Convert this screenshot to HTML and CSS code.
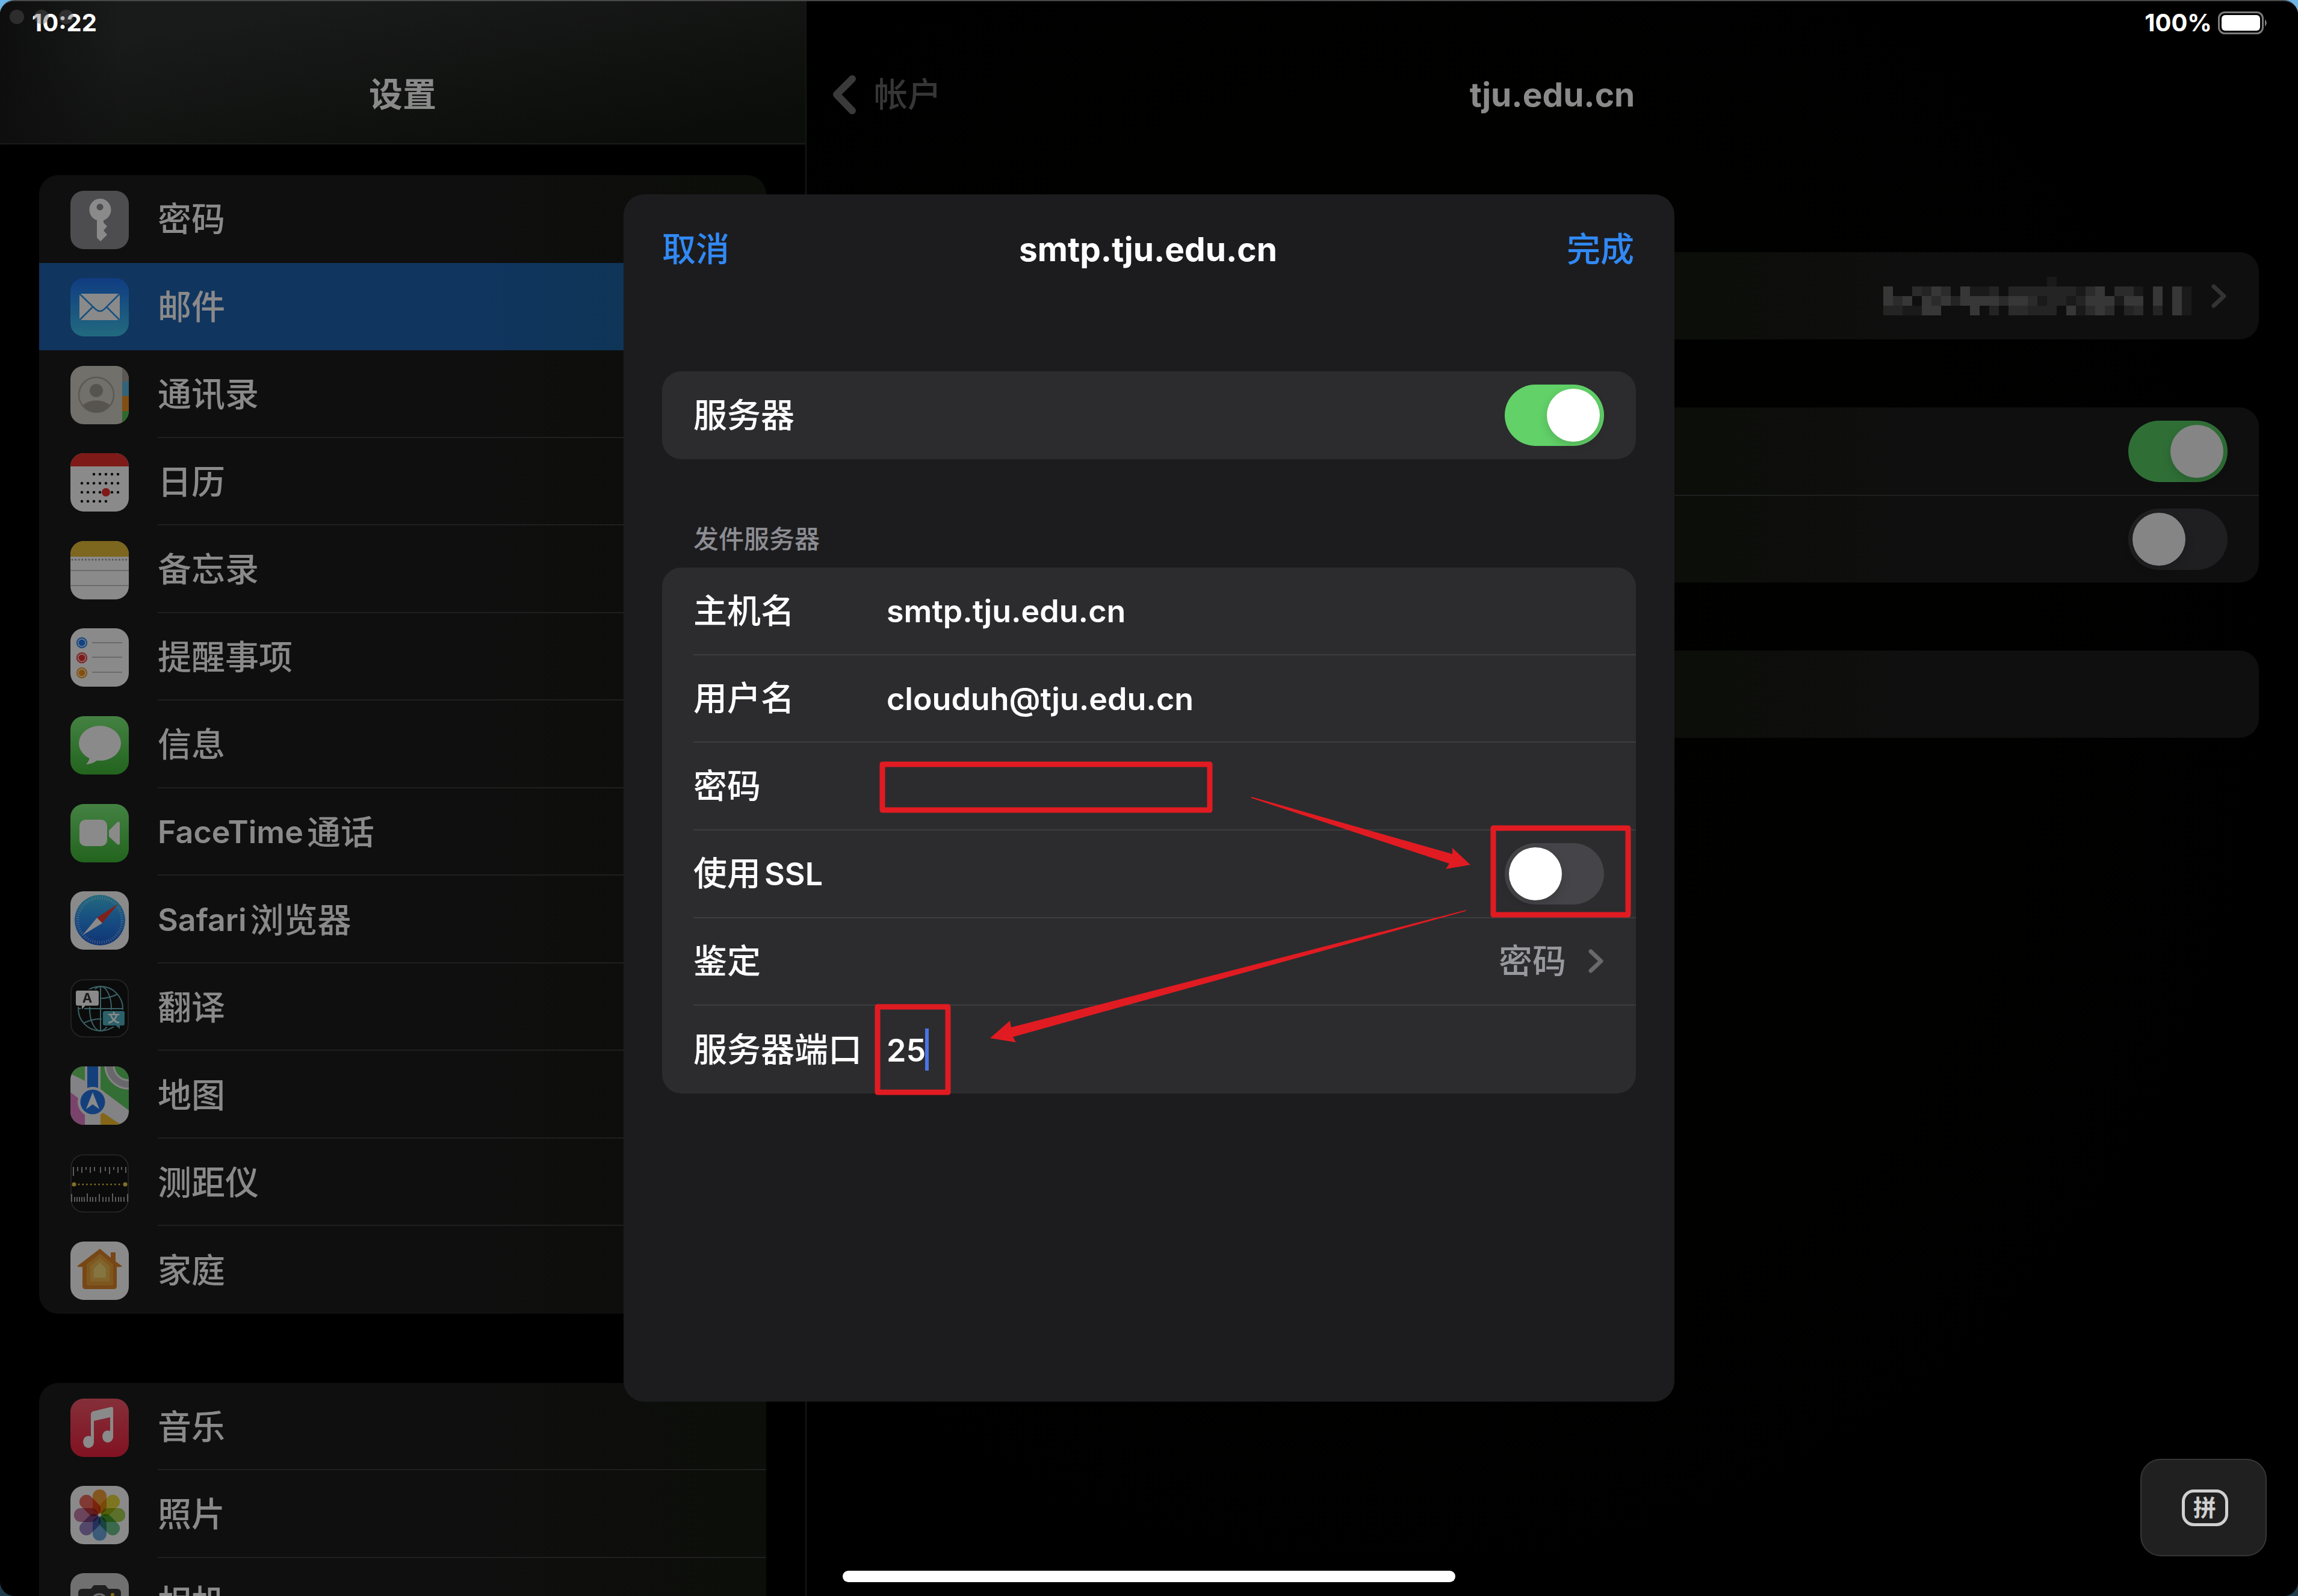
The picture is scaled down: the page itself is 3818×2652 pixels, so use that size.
FILE: index.html
```html
<!DOCTYPE html>
<html lang="zh-CN">
<head>
<meta charset="utf-8">
<meta name="viewport" content="width=device-width, initial-scale=1">
<title>设置</title>
<link rel="stylesheet" href="styles.css">
</head>
<body>
<div class="screen">
  <nav class="sidebar" aria-label="设置">
    <header class="sidebar-header"><h1 class="bar-title">设置</h1></header>
    <ul class="menu menu-main">
      <li><a class="item" href="#passwords">
        <svg class="icon" viewBox="0 0 97 97"><rect width="97" height="97" rx="22" fill="#8e8e93"/><path fill="#fff" fill-rule="evenodd" d="M49 13a18.5 18.5 0 0 1 6 36v4l6 6-6 7 6 7-11 11-6-6V49a18.500 18.500 0 0 1 5-36zm0 8.500a5.500 5.500 0 1 0 .1 0z"/></svg>
        <span class="item-label">密码</span></a></li>
      <li><a class="item is-selected" href="#mail" aria-current="page">
        <svg class="icon" viewBox="0 0 97 97"><defs><linearGradient id="gm" x2="0" y2="1"><stop offset="0" stop-color="#1e6ff0"/><stop offset="1" stop-color="#3fc4ea"/></linearGradient></defs><rect width="97" height="97" rx="22" fill="url(#gm)"/><rect x="15" y="26" width="67" height="44" rx="4" fill="#fff"/><path d="M16 27 42 52q7 6 14 0L81 27M16 69l21-21M81 69 60 48" fill="none" stroke="#2a94ea" stroke-width="2.500"/></svg>
        <span class="item-label">邮件</span></a></li>
      <li><a class="item" href="#contacts">
        <svg class="icon" viewBox="0 0 97 97"><defs><clipPath id="round"><rect width="97" height="97" rx="22"/></clipPath></defs><g clip-path="url(#round)"><rect width="97" height="97" fill="#d2cfc4"/><rect x="86" width="11" height="26" fill="#aaa39f"/><rect x="86" y="26" width="11" height="24" fill="#5cb7e0"/><rect x="86" y="50" width="11" height="25" fill="#f09123"/><rect x="86" y="75" width="11" height="22" fill="#59c356"/><circle cx="43" cy="48" r="29" fill="none" stroke="#a9a49c" stroke-width="2.500"/><circle cx="43" cy="41" r="11" fill="#a29c95"/><path d="M21 65c10-10 34-10 44 0-10 16-34 16-44 0z" fill="#a29c95"/></g></svg>
        <span class="item-label">通讯录</span></a></li>
      <li><a class="item" href="#calendar">
        <svg class="icon" viewBox="0 0 97 97"><g clip-path="url(#round)"><rect width="97" height="97" fill="#fff"/><rect width="97" height="22" fill="#e9302c"/><g stroke="#111" stroke-width="4.500" stroke-linecap="round" stroke-dasharray="0 10"><path d="M39 35h41M19 50h61M19 65h61M19 80h41"/></g><circle cx="59" cy="65" r="7" fill="#e9302c"/></g></svg>
        <span class="item-label">日历</span></a></li>
      <li><a class="item" href="#notes">
        <svg class="icon" viewBox="0 0 97 97"><g clip-path="url(#round)"><rect width="97" height="97" fill="#fff"/><rect width="97" height="26" fill="#e8bd36"/><path d="M3 31h92" stroke="#999" stroke-width="3" stroke-linecap="round" stroke-dasharray="0 5.600"/><path d="M0 49h97M0 74h97" stroke="#b9b9bb" stroke-width="1.500"/></g></svg>
        <span class="item-label">备忘录</span></a></li>
      <li><a class="item" href="#reminders">
        <svg class="icon" viewBox="0 0 97 97"><rect width="97" height="97" rx="22" fill="#fff"/><path d="M36 24h50M36 48h50M36 73h50" stroke="#c4c4c6" stroke-width="2"/><g stroke-width="2.500"><g fill="none"><circle cx="19" cy="24" r="8" stroke="#3d92f5"/><circle cx="19" cy="49" r="8" stroke="#f05050"/><circle cx="19" cy="74" r="8" stroke="#f5a63c"/></g></g><circle cx="19" cy="24" r="5.500" fill="#1f7bf0"/><circle cx="19" cy="49" r="5.500" fill="#e8312c"/><circle cx="19" cy="74" r="5.500" fill="#f39219"/></svg>
        <span class="item-label">提醒事项</span></a></li>
      <li><a class="item" href="#messages">
        <svg class="icon" viewBox="0 0 97 97"><defs><linearGradient id="gg" x2="0" y2="1"><stop offset="0" stop-color="#7ef07c"/><stop offset="1" stop-color="#3fb837"/></linearGradient></defs><rect width="97" height="97" rx="22" fill="url(#gg)"/><ellipse cx="49" cy="45" rx="35" ry="29" fill="#fff"/><path d="M32 66q0 8-6 14 10 0 19-7z" fill="#fff"/></svg>
        <span class="item-label">信息</span></a></li>
      <li><a class="item" href="#facetime">
        <svg class="icon" viewBox="0 0 97 97"><rect width="97" height="97" rx="22" fill="url(#gg)"/><rect x="15" y="26" width="46" height="44" rx="10" fill="#fff"/><path d="M64 44 78 30q4-2 4 2v33q0 4-4 2L64 54z" fill="#fff"/></svg>
        <span class="item-label"><span class="latin">FaceTime</span>通话</span></a></li>
      <li><a class="item" href="#safari">
        <svg class="icon" viewBox="0 0 97 97"><defs><linearGradient id="gs" x2="0" y2="1"><stop offset="0" stop-color="#3fc3e8"/><stop offset=".5" stop-color="#2a8ff0"/><stop offset="1" stop-color="#1d5fd8"/></linearGradient></defs><rect width="97" height="97" rx="22" fill="#fff"/><circle cx="49" cy="48" r="42" fill="url(#gs)"/><circle cx="49" cy="48" r="37" fill="none" stroke="#cfe6ff" stroke-width="5" stroke-dasharray="1 2.870" opacity=".7"/><path d="M79 21 44 44l9 9z" fill="#ee3b30"/><path d="M20 73 44 44l9 9z" fill="#fff"/></svg>
        <span class="item-label"><span class="latin">Safari</span>浏览器</span></a></li>
      <li><a class="item" href="#translate">
        <svg class="icon" viewBox="0 0 97 97"><rect x="1" y="1" width="95" height="95" rx="21" fill="#151515" stroke="#4a4a4c" stroke-width="1.500"/><g fill="none" stroke="#6cb3bb" stroke-width="2"><circle cx="50" cy="49" r="37"/><ellipse cx="50" cy="49" rx="18" ry="37"/><path d="M50 12v74M13 49h74M22 25q28 14 56 0M22 73q28-14 56 0"/></g><path d="M12 18h32q4 0 4 4v19q0 4-4 4H25l-7 8v-8h-6q-4 0-4-4V22q0-4 4-4z" fill="#fff" stroke="#151515" stroke-width="2"/><path d="M57 52h30q4 0 4 4v18q0 4-4 4h-4v7l-8-7H57q-4 0-4-4V56q0-4 4-4z" fill="#4fb4c4" stroke="#151515" stroke-width="2"/><text class="glyph-a" x="28" y="39">A</text><text class="glyph-wen" x="72" y="72">文</text></svg>
        <span class="item-label">翻译</span></a></li>
      <li><a class="item" href="#maps">
        <svg class="icon" viewBox="0 0 97 97"><g clip-path="url(#round)"><rect width="97" height="97" fill="#f2f1f4"/><path d="M0 0h24v24L0 12z" fill="#6fd468"/><path d="M50 0h47v73L50 38z" fill="#5fcb60"/><circle cx="97" cy="-2" r="32" fill="none" stroke="#f2f1f4" stroke-width="17"/><circle cx="97" cy="-2" r="32" fill="none" stroke="#c0c0c8" stroke-width="11"/><path d="M0 43l24 18v36H0z" fill="#e07cc8"/><path d="M50 97V74l34 23z" fill="#f3bd2c"/><path d="M28 0h18v40H28z" fill="#2477e8"/><circle cx="37" cy="59" r="25" fill="#f2f1f4"/><circle cx="37" cy="59" r="20.500" fill="#2477e8"/><path d="M37 43 48 71l-11-8-11 8z" fill="#fff"/></g></svg>
        <span class="item-label">地图</span></a></li>
      <li><a class="item" href="#measure">
        <svg class="icon" viewBox="0 0 97 97"><rect x="1" y="1" width="95" height="95" rx="21" fill="#151515" stroke="#4a4a4c" stroke-width="1.500"/><g stroke="#dcdcdc" stroke-width="1.500"><path d="M5 21v15M12 21v7M19 21v10M26 21v5M33 21v10M40 21v7M50 21v10M58 21v7M65 21v12M72 21v5M79 21v10M85 21v5M92 21v10"/><path d="M2 66v13M7 71v8M11 71v8M15 71v8M19 71v8M23 71v8M28 65v14M33 71v8M37 71v8M42 71v8M48 66v13M54 71v8M59 71v8M64 71v8M70 65v14M75 71v8M80 71v8M84 71v8M89 71v8M95 66v13"/></g><path d="M14 50h72" stroke="#e6c63c" stroke-width="3" stroke-linecap="round" stroke-dasharray="0 6.700"/><circle cx="6" cy="50" r="3.500" fill="#f0d04a"/><circle cx="91" cy="50" r="3.500" fill="#f0d04a"/></svg>
        <span class="item-label">测距仪</span></a></li>
      <li><a class="item" href="#home">
        <svg class="icon" viewBox="0 0 97 97"><rect width="97" height="97" rx="22" fill="#fff"/><path d="M49 12 67 27v-9h8v15l11 8q-2 2-9 1v32q0 5-5 5H25q-5 0-5-5V42q-7 1-9-1z" fill="#dc8428"/><path d="M49 20 71 38v33q0 2-2 2H29q-2 0-2-2V38z" fill="#eaa13a"/><path d="M49 27 65 41v25H33V41z" fill="#efb950"/><path d="M49 35 59 45v15H39V45z" fill="#f7d878"/></svg>
        <span class="item-label">家庭</span></a></li>
    </ul>
    <ul class="menu menu-media">
      <li><a class="item" href="#music">
        <svg class="icon" viewBox="0 0 97 97"><defs><linearGradient id="gr" x2="0" y2="1"><stop offset="0" stop-color="#f5586a"/><stop offset="1" stop-color="#f0213f"/></linearGradient></defs><rect width="97" height="97" rx="22" fill="url(#gr)"/><path d="M34 27q0-5 4-6l29-7q4-1 4 3v46a9 10 0 1 1-5-9V31l-27 6v35a9 10 0 1 1-5-9z" fill="#fff"/></svg>
        <span class="item-label">音乐</span></a></li>
      <li><a class="item" href="#photos">
        <svg class="icon" viewBox="0 0 97 97"><rect width="97" height="97" rx="22" fill="#fff"/><g class="petals"><rect x="37" y="6" width="23" height="40" rx="11" fill="#f4a03c"/><rect x="37" y="6" width="23" height="40" rx="11" fill="#e8d83a" transform="rotate(45 48.500 48.500)"/><rect x="37" y="6" width="23" height="40" rx="11" fill="#a8cf50" transform="rotate(90 48.500 48.500)"/><rect x="37" y="6" width="23" height="40" rx="11" fill="#6dc38a" transform="rotate(135 48.500 48.500)"/><rect x="37" y="6" width="23" height="40" rx="11" fill="#6ea8e0" transform="rotate(180 48.500 48.500)"/><rect x="37" y="6" width="23" height="40" rx="11" fill="#9a86c4" transform="rotate(225 48.500 48.500)"/><rect x="37" y="6" width="23" height="40" rx="11" fill="#c77fa8" transform="rotate(270 48.500 48.500)"/><rect x="37" y="6" width="23" height="40" rx="11" fill="#ee6a60" transform="rotate(315 48.500 48.500)"/></g></svg>
        <span class="item-label">照片</span></a></li>
      <li><a class="item" href="#camera">
        <svg class="icon" viewBox="0 0 97 97"><rect width="97" height="97" rx="22" fill="#cfcfd2"/><path d="M20 26h14l5-6h19l5 6h14q7 0 7 7v33q0 7-7 7H20q-7 0-7-7V33q0-7 7-7z" fill="#3a3a3c"/><circle cx="48" cy="48" r="13" fill="none" stroke="#cfcfd2" stroke-width="3"/><circle cx="70" cy="36" r="3" fill="#f0c930"/></svg>
        <span class="item-label">相机</span></a></li>
    </ul>
  </nav>

  <main class="detail">
    <header class="detail-header">
      <a class="back" href="#accounts"><svg class="back-arrow" viewBox="0 0 39 65"><path d="M33 6 7 32l26 27"/></svg>帐户</a>
      <h2 class="bar-title latin-title">tju.edu.cn</h2>
    </header>
    <div class="detail-body">
      <section class="card account-card">
        <svg class="mosaic" viewBox="0 0 33 4" shape-rendering="crispEdges" aria-label="帐户">
          <path fill="#1a1a1b" d="M17 0h1v1h-1zM31 1h1v1h-1zM26 1h1v1h-1zM9 1h2v1H9zM20 1h1v1h-1zM16 2h1v1h-1zM19 2h1v1h-1zM24 2h1v1h-1zM31 2h1v2h-1zM2 3h2v1H2zM20 3h1v1h-1z"/>
          <path fill="#242425" d="M4 1h1v1H4zM11 1h1v1h-1zM13 1h7v1h-7zM7 2h1v1H7zM17 2h2v1h-2zM20 2h1v1h-1zM0 3h2v1H0zM11 3h1v1h-1zM15 3h3v1h-3zM25 3h1v1h-1zM28 3h1v1h-1z"/>
          <path fill="#2b2b2c" d="M3 1h1v1H3zM6 1h1v1H6zM21 1h1v1h-1zM24 1h2v1h-2zM1 2h1v1H1zM5 2h1v1H5zM12 2h1v1h-1zM15 2h1v1h-1zM13 3h2v1h-2zM21 3h1v1h-1zM23 3h1v1h-1zM26 3h1v1h-1z"/>
          <path fill="#373738" d="M0 1h1v2H0zM5 1h1v1H5zM8 1h1v1H8zM22 1h1v1h-1zM28 1h1v2h-1zM30 1h1v3h-1zM2 2h1v1H2zM4 2h1v2H4zM6 2h1v1H6zM8 2h4v1H8zM13 2h2v1h-2zM21 2h3v1h-3zM25 2h2v1h-2zM5 3h1v1H5zM9 3h1v1H9zM19 3h1v1h-1zM22 3h1v1h-1z"/>
        </svg>
        <svg class="chevron" viewBox="0 0 27 42"><path d="M5 5l17 16L5 37"/></svg>
      </section>
      <section class="card switches-card">
        <div class="switch-row"><input class="switch" type="checkbox" role="switch" aria-label="邮件" checked></div>
        <div class="switch-row"><input class="switch" type="checkbox" role="switch" aria-label="备忘录"></div>
      </section>
      <section class="card empty-card"></section>
    </div>
  </main>

  <div class="status">
    <span class="status-time">10:22</span>
    <span class="status-battery">100%
      <svg class="battery" viewBox="0 0 84 38"><rect x="1.500" y="1.500" width="73" height="35" rx="10" fill="none" stroke="#7d7d7d" stroke-width="3"/><rect x="6" y="6" width="64" height="26" rx="6" fill="#fff"/><path d="M78 13q6 6 0 12z" fill="#7d7d7d"/></svg>
    </span>
  </div>
  <div class="window-dots" aria-hidden="true"><i></i><i></i><i></i></div>

  <div class="overlay">
    <form class="sheet" role="dialog" aria-labelledby="sheet-title">
      <header class="sheet-header">
        <button class="link-button" type="button">取消</button>
        <h2 class="sheet-title" id="sheet-title">smtp.tju.edu.cn</h2>
        <button class="link-button is-end" type="submit">完成</button>
      </header>
      <section class="group group-single">
        <div class="row"><label class="row-label" for="server-on">服务器</label><input class="switch" id="server-on" type="checkbox" role="switch" checked></div>
      </section>
      <h3 class="group-title">发件服务器</h3>
      <section class="group group-fields">
        <div class="row"><label class="row-label" for="host">主机名</label><input class="field" id="host" type="text" value="smtp.tju.edu.cn"></div>
        <div class="row"><label class="row-label" for="user">用户名</label><input class="field" id="user" type="text" value="clouduh@tju.edu.cn"></div>
        <div class="row"><label class="row-label" for="pass">密码</label><input class="field" id="pass" type="password"></div>
        <div class="row"><label class="row-label" for="ssl">使用<span class="latin">SSL</span></label><input class="switch" id="ssl" type="checkbox" role="switch"></div>
        <div class="row"><span class="row-label">鉴定</span><button class="row-value" type="button">密码<svg class="chevron" viewBox="0 0 27 42"><path d="M5 5l17 16L5 37"/></svg></button></div>
        <div class="row"><label class="row-label" for="port">服务器端口</label><input class="field field-port" id="port" type="text" inputmode="numeric" value="25"><span class="caret"></span></div>
      </section>
      <svg class="marks" viewBox="0 0 1746 2006" aria-hidden="true">
        <g fill="none" stroke="#e11b22" stroke-width="9" stroke-linejoin="round">
          <rect x="430" y="947" width="544" height="76"/>
          <rect x="1445" y="1053" width="224" height="144"/>
          <rect x="422" y="1350" width="117" height="142"/>
        </g>
        <g fill="#e11b22">
          <path d="M1043 1001 1377 1096 1377 1086 1407 1114 1366 1121 1372 1112 1043 1003z"/>
          <path d="M1400 1189 1399 1191 647 1400 652 1409 609 1402 642 1373 644 1384z"/>
        </g>
      </svg>
    </form>
  </div>

  <button class="ime" type="button" aria-label="拼音键盘"><span class="ime-key">拼</span></button>
  <div class="home-indicator"></div>
</div>
</body>
</html>
```
FILE: styles.css
```css
:root {
  --text: 56px;
  --latin: 52px;
  --gutter: 65px;
  --dim: #8a8a8a;
  --hairline: #1f1f20;
}

* { box-sizing: border-box; }

body {
  margin: 0;
  background: linear-gradient(#6bb5e8 50%, #1d3c4c 50%);
  font-family: Inter, "Noto Sans CJK SC", sans-serif;
  font-size: var(--text);
  font-weight: 500;
  line-height: 80px;
  color: #fff;
}

h1, h2, h3, ul { margin: 0; padding: 0; font-size: inherit; font-weight: inherit; }
ul { list-style: none; }
a { color: inherit; text-decoration: none; }
button, input { font: inherit; color: inherit; background: none; border: 0; padding: 0; margin: 0; }
.latin { font-size: var(--latin); font-weight: 600; }

.screen {
  position: relative;
  display: grid;
  grid-template-columns: 1340fr 2478fr;
  height: 100vh;
  overflow: hidden;
  border-top: 2px solid #474747;
  border-radius: 24px;
  background: #000;
}

/* Sidebar */
.sidebar {
  min-width: 0;
  height: 100vh;
  overflow: hidden;
  border-right: 2px solid #161616;
  color: var(--dim);
}
.sidebar-header {
  height: 238px;
  padding-top: 115px;
  border-bottom: 2px solid #1a1a1a;
  background: linear-gradient(to right, #0e0e0e, transparent 15%), linear-gradient(170deg, #191a1a 20%, #0b0d0a 90%);
}
.bar-title { text-align: center; font-weight: 600; }
.menu {
  display: grid;
  grid-auto-rows: 1fr;
  margin: 51px var(--gutter) 0;
  border-radius: 32px;
  overflow: hidden;
  background: linear-gradient(to right, #0f0f0f 60%, #0c0e09);
}
.menu-main { min-height: 1892px; }
.menu-media { min-height: 436px; margin-top: 115px; }
.item {
  display: flex;
  align-items: center;
  gap: 48px;
  height: 100%;
  padding: 3px 0 0 52px;
}
.item-label {
  display: flex;
  align-items: center;
  flex: 1;
  align-self: stretch;
  border-bottom: 2px solid var(--hairline);
}
.menu-main li:first-child .item-label,
.menu-main li:last-child .item-label,
.is-selected .item-label { border-color: transparent; }
.item-label .latin { margin-right: 6px; }
.is-selected { background: linear-gradient(to right, #10355f 60%, #0d3550); }
.icon { width: 97px; height: 97px; flex: none; filter: brightness(.54); }
.petals { mix-blend-mode: multiply; }
.petals rect { mix-blend-mode: multiply; }
.glyph-a { font-size: 22px; font-weight: 700; text-anchor: middle; fill: #333; }
.glyph-wen { font-size: 20px; font-weight: 700; text-anchor: middle; fill: #fff; }

/* Detail pane */
.detail { min-width: 0; color: var(--dim); background: radial-gradient(circle at 40% 45%, #020300, #000 70%); }
.detail-header {
  display: grid;
  grid-template-columns: 1fr auto 1fr;
  align-items: center;
  padding: 115px 43px 0;
}
.latin-title, .sheet-title { font-size: 55px; font-weight: 700; }
.detail-header .latin-title { grid-column: 2; }
.back { display: flex; align-items: center; gap: 30px; color: #363636; }
.back-arrow { width: 39px; height: 65px; fill: none; stroke: #3a3a3a; stroke-width: 12; stroke-linecap: round; stroke-linejoin: round; }
.detail-body {
  display: flex;
  flex-direction: column;
  gap: 113px;
  padding: 222px var(--gutter) 0;
}
.card {
  min-height: 145px;
  border-radius: 32px;
  background: linear-gradient(to right, #0c0e09 60%, #0f0f0f 75%);
}
.account-card {
  display: flex;
  align-items: center;
  justify-content: flex-end;
  gap: 16px;
  padding-right: 53px;
}
.mosaic { width: 528px; height: 64px; }
.chevron { width: 27px; height: 42px; fill: none; stroke-width: 7; stroke-linecap: round; stroke-linejoin: round; stroke: #333335; }
.switch-row {
  display: flex;
  align-items: center;
  justify-content: flex-end;
  height: 145px;
  padding-right: 52px;
}
.switch-row + .switch-row { border-top: 2px solid var(--hairline); height: 146px; }

/* Switch */
.switch {
  appearance: none;
  display: flex;
  width: 165px;
  height: 102px;
  padding: 7px;
  border-radius: 51px;
  background: #454549;
}
.switch::before {
  content: "";
  width: 88px;
  height: 88px;
  border-radius: 50%;
  background: #fff;
  box-shadow: 0 6px 16px rgba(0, 0, 0, .15);
}
.switch:checked { justify-content: flex-end; background: #61d168; }
.detail .switch { background: #1f1f21; }
.detail .switch:checked { background: #2f6f36; }
.detail .switch::before { background: #858585; }

/* Status bar */
.status {
  position: absolute;
  inset: 16px 53px auto 53px;
  display: flex;
  justify-content: space-between;
  font-size: 40px;
  line-height: 40px;
  font-weight: 700;
}
.status-battery { display: flex; align-items: center; gap: 10px; }
.battery { width: 84px; height: 38px; margin-right: -4px; }
.window-dots { position: absolute; top: 14px; left: 16px; display: flex; gap: 17px; }
.window-dots i { width: 24px; height: 24px; border-radius: 50%; background: rgba(90, 90, 90, .4); }

/* Sheet */
.overlay {
  position: fixed;
  inset: 0;
  display: grid;
  place-items: center;
}
.sheet {
  position: relative;
  width: 1746px;
  min-height: 2006px;
  padding: 0 64px;
  border-radius: 34px;
  background: #1c1c1e;
}
.sheet-header {
  display: grid;
  grid-template-columns: 1fr auto 1fr;
  align-items: center;
  height: 182px;
  padding-right: 3px;
}
.sheet-title { line-height: 80px; }
.link-button { justify-self: start; color: #3189f5; }
.link-button.is-end { justify-self: end; }
.group {
  display: grid;
  grid-auto-rows: 1fr;
  border-radius: 32px;
  background: #2c2c2e;
}
.group-single { min-height: 146px; margin-top: 112px; }
.group-fields { min-height: 874px; }
.group-title {
  padding: 106px 52px 20px;
  font-size: 42px;
  line-height: 54px;
  color: #8d8d93;
}
.row {
  display: flex;
  align-items: center;
  margin-left: 52px;
  padding-right: 53px;
  border-bottom: 2px solid #3d3d40;
}
.row:last-child { border-bottom: 0; }
.row-label { min-width: 321px; white-space: nowrap; }
.row-label .latin { margin-left: 6px; }
.row .switch, .row-value { margin-left: auto; }
.field { flex: 1; min-width: 0; height: 80px; padding-top: 3px; font-size: var(--latin); font-weight: 600; outline: 0; }
.field-port { flex: none; width: 64px; }
.caret { width: 6px; height: 70px; background: #4a74e6; }
.row-value { display: flex; align-items: center; gap: 36px; color: #98989f; }
.sheet .chevron { stroke: #69696c; }
.marks { position: absolute; top: 0; left: 0; width: 1746px; height: 2006px; pointer-events: none; }

/* Floating input-method key and home indicator */
.ime {
  position: absolute;
  right: 52px;
  bottom: 66px;
  display: grid;
  place-items: center;
  width: 210px;
  height: 162px;
  padding-left: 4px;
  border: 2px solid #363636;
  border-radius: 34px;
  background: #202020;
}
.ime-key {
  width: 77px;
  height: 61px;
  border: 5px solid #d0d0d0;
  border-radius: 20px;
  font-size: 38px;
  font-weight: 600;
  line-height: 50px;
  color: #d0d0d0;
}
.home-indicator {
  position: absolute;
  bottom: 23px;
  left: 50%;
  width: 1018px;
  height: 19px;
  margin-left: -509px;
  border-radius: 10px;
  background: #fff;
}
```
